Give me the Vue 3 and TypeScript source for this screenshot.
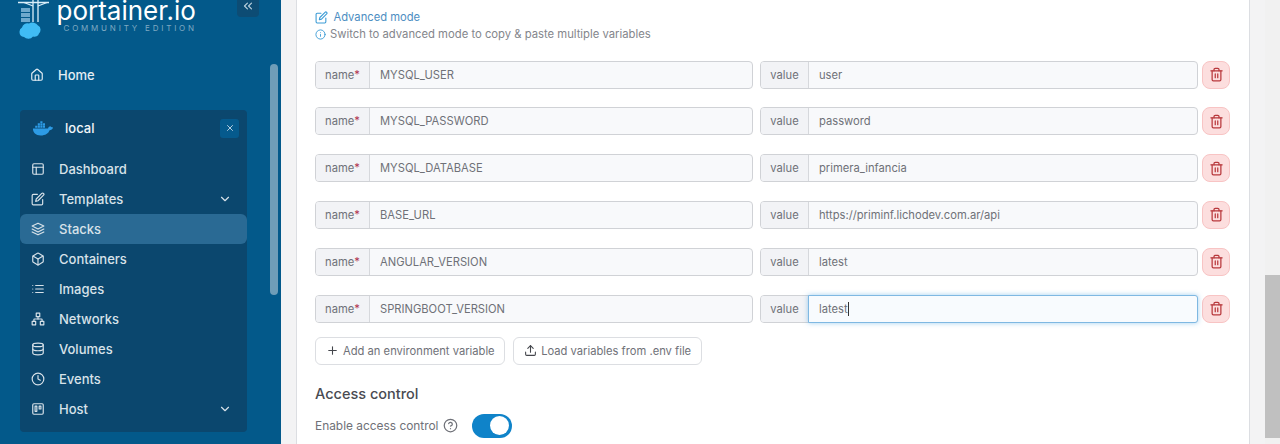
<template>
  <div class="page">
    <aside class="sidebar">
      <div class="brand">
        <svg class="logo" viewBox="0 0 32 40" width="32" height="40">
          <g fill="none" stroke="#d9eef9" stroke-width="1.3">
            <path d="M0 2.500h31M15 0v22M20 0v22" />
            <path d="M15 6l-9-3.500M20 6l9-3.500" />
          </g>
          <g fill="#6fa9cc">
            <rect x="3" y="8" width="9" height="4" />
            <rect x="3" y="13" width="9" height="4" />
            <rect x="3" y="18" width="9" height="4" />
          </g>
          <path fill="#40bcf4" d="M6 37a5 5 0 0 1-4.500-5 5 5 0 0 1 2.500-4.500 5.500 5.500 0 0 1 7-4 6.500 6.500 0 0 1 9 2 4.500 4.500 0 0 1 2.500 4.500 5 5 0 0 1-1.500 3.500 4.500 4.500 0 0 1-6 3 6 6 0 0 1-9 .5z" />
        </svg>
        <div class="wordmark">
          <span class="word">portainer.io</span>
          <span class="edition">COMMUNITY EDITION</span>
        </div>
        <button class="collapse"><Icon name="chevronsLeft" :size="14" /></button>
      </div>

      <div class="nav-scroll">
        <a class="home"><Icon name="home" :size="14" /><span>Home</span></a>

        <section class="env">
          <div class="env-head">
            <svg class="whale" viewBox="0 0 24 16" width="22" height="15">
              <path fill="#2d9be5" d="M1 8h16.500c.4-1.500 1.500-2.400 2.700-2.400.4.800 1 1.300 2.800 1.300-.6 2-2.200 2.900-3.800 2.900C18 13.200 14.500 15.500 9.500 15.500 4 15.500 1 12.500 1 8z" />
              <path fill="#2d9be5" d="M3.500 5h2.300v2.300H3.500zM6.300 5h2.300v2.300H6.300zM9.100 5h2.300v2.300H9.100zM11.900 5h2.300v2.300h-2.300zM6.300 2.300h2.300v2.300H6.300zM9.100 2.300h2.300v2.300H9.100zM11.900 2.300h2.300v2.300h-2.300zM9.100 0h2.300v2h-2.300z" />
            </svg>
            <span class="env-name">local</span>
            <button class="env-close"><Icon name="x" :size="10" /></button>
          </div>
          <a v-for="item in menu" :key="item.label" class="item" :class="{ active: item.active }">
            <Icon :name="item.icon" :size="14" />
            <span class="item-label">{{ item.label }}</span>
            <Icon v-if="item.more" class="chev" name="chevronDown" :size="14" />
          </a>
        </section>
        <div class="side-thumb"></div>
      </div>
    </aside>

    <main class="content">
      <div class="card">
        <a class="advanced"><Icon name="edit" :size="13" /><span>Advanced mode</span></a>
        <p class="hint"><Icon name="info" :size="11" /><span>Switch to advanced mode to copy &amp; paste multiple variables</span></p>

        <div class="rows">
          <div v-for="(row, i) in envVars" :key="row.name" class="row">
            <div class="group name-group">
              <span class="addon name-addon">name<em>*</em></span>
              <span class="field">{{ row.name }}</span>
            </div>
            <div class="group value-group" :class="{ focused: i === envVars.length - 1 }">
              <span class="addon value-addon">value</span>
              <span class="field">{{ row.value }}<i v-if="i === envVars.length - 1" class="caret"></i></span>
            </div>
            <button class="trash"><Icon name="trash" :size="15" /></button>
          </div>
        </div>

        <div class="actions">
          <button class="btn add"><Icon name="plus" :size="13" /><span>Add an environment variable</span></button>
          <button class="btn load"><Icon name="upload" :size="13" /><span>Load variables from .env file</span></button>
        </div>

        <h3 class="section-title">Access control</h3>
        <div class="access">
          <span>Enable access control</span>
          <Icon class="help" name="help" :size="15" />
          <span class="switch"><span class="knob"></span></span>
        </div>
      </div>
    </main>

    <div class="page-scroll"><div class="page-thumb"></div></div>
  </div>
</template>

<script setup lang="ts">
import { h } from "vue"

const iconPaths: Record<string, string[]> = {
  chevronsLeft: ["M11 17l-5-5 5-5", "M18 17l-5-5 5-5"],
  chevronDown: ["M6 9l6 6 6-6"],
  x: ["M18 6L6 18", "M6 6l12 12"],
  home: [
    "M15 21v-8a1 1 0 0 0-1-1h-4a1 1 0 0 0-1 1v8",
    "M3 10a2 2 0 0 1 .709-1.528l7-5.999a2 2 0 0 1 2.582 0l7 5.999A2 2 0 0 1 21 10v9a2 2 0 0 1-2 2H5a2 2 0 0 1-2-2z",
  ],
  layout: ["M5 3h14a2 2 0 0 1 2 2v14a2 2 0 0 1-2 2H5a2 2 0 0 1-2-2V5a2 2 0 0 1 2-2z", "M3 9h18", "M9 21V9"],
  edit: [
    "M11 4H4a2 2 0 0 0-2 2v14a2 2 0 0 0 2 2h14a2 2 0 0 0 2-2v-7",
    "M18.5 2.5a2.121 2.121 0 0 1 3 3L12 15l-4 1 1-4 9.500-9.500z",
  ],
  layers: ["M12 2L2 7l10 5 10-5-10-5z", "M2 17l10 5 10-5", "M2 12l10 5 10-5"],
  box: [
    "M21 16V8a2 2 0 0 0-1-1.730l-7-4a2 2 0 0 0-2 0l-7 4A2 2 0 0 0 3 8v8a2 2 0 0 0 1 1.730l7 4a2 2 0 0 0 2 0l7-4A2 2 0 0 0 21 16z",
    "M3.270 6.960L12 12.010l8.730-5.050",
    "M12 22.080V12",
  ],
  list: ["M8 6h13", "M8 12h13", "M8 18h13", "M3 6h.01", "M3 12h.01", "M3 18h.01"],
  network: [
    "M9 2h6v6H9z",
    "M16 16h6v6h-6z",
    "M2 16h6v6H2z",
    "M5 16v-3a1 1 0 0 1 1-1h12a1 1 0 0 1 1 1v3",
    "M12 12V8",
  ],
  database: [
    "M21 5c0 1.660-4 3-9 3S3 6.660 3 5s4-3 9-3 9 1.340 9 3z",
    "M21 12c0 1.660-4 3-9 3s-9-1.340-9-3",
    "M3 5v14c0 1.660 4 3 9 3s9-1.340 9-3V5",
  ],
  clock: ["M22 12a10 10 0 1 1-20 0 10 10 0 0 1 20 0z", "M12 6v6l4 2"],
  host: ["M5 3h14a2 2 0 0 1 2 2v14a2 2 0 0 1-2 2H5a2 2 0 0 1-2-2V5a2 2 0 0 1 2-2z", "M7 7h3v9H7z", "M14 7h3v5h-3z"],
  info: ["M22 12a10 10 0 1 1-20 0 10 10 0 0 1 20 0z", "M12 16v-4", "M12 8h.01"],
  trash: [
    "M3 6h18",
    "M19 6v14c0 1-1 2-2 2H7c-1 0-2-1-2-2V6",
    "M8 6V4c0-1 1-2 2-2h4c1 0 2 1 2 2v2",
    "M10 11v6",
    "M14 11v6",
  ],
  plus: ["M12 5v14", "M5 12h14"],
  upload: ["M21 15v4a2 2 0 0 1-2 2H5a2 2 0 0 1-2-2v-4", "M17 8l-5-5-5 5", "M12 3v12"],
  help: [
    "M22 12a10 10 0 1 1-20 0 10 10 0 0 1 20 0z",
    "M9.090 9a3 3 0 0 1 5.830 1c0 2-3 3-3 3",
    "M12 17h.01",
  ],
}

const Icon = (props: { name: string; size: number }) =>
  h(
    "svg",
    {
      class: "icon",
      width: props.size,
      height: props.size,
      viewBox: "0 0 24 24",
      fill: "none",
      stroke: "currentColor",
      "stroke-width": 2,
      "stroke-linecap": "round",
      "stroke-linejoin": "round",
    },
    iconPaths[props.name].map((d) => h("path", { d })),
  )
Icon.props = ["name", "size"]

const menu = [
  { label: "Dashboard", icon: "layout" },
  { label: "Templates", icon: "edit", more: true },
  { label: "Stacks", icon: "layers", active: true },
  { label: "Containers", icon: "box" },
  { label: "Images", icon: "list" },
  { label: "Networks", icon: "network" },
  { label: "Volumes", icon: "database" },
  { label: "Events", icon: "clock" },
  { label: "Host", icon: "host", more: true },
]

const envVars = [
  { name: "MYSQL_USER", value: "user" },
  { name: "MYSQL_PASSWORD", value: "password" },
  { name: "MYSQL_DATABASE", value: "primera_infancia" },
  { name: "BASE_URL", value: "https://priminf.lichodev.com.ar/api" },
  { name: "ANGULAR_VERSION", value: "latest" },
  { name: "SPRINGBOOT_VERSION", value: "latest" },
]
</script>

<style>
html,
body {
  margin: 0;
  overflow: hidden;
}
</style>

<style scoped>
.page {
  display: flex;
  width: 1280px;
  height: 444px;
  overflow: hidden;
  background: #f3f3f4;
  font-family: Inter, "Liberation Sans", sans-serif;
}

.icon {
  flex: none;
  display: block;
}

/* sidebar */

.sidebar {
  flex: none;
  width: 281px;
  background: #03598a;
  color: #e8f0f5;
}

.brand {
  display: flex;
  height: 55px;
  align-items: flex-start;
  padding-left: 18px;
}

.wordmark {
  display: flex;
  flex-direction: column;
  margin-left: 6.500px;
}

.word {
  font-size: 26px;
  line-height: 22px;
  color: #fff;
}

.edition {
  margin-top: 2px;
  padding-left: 7px;
  font-size: 8px;
  line-height: 8px;
  letter-spacing: 2.800px;
  white-space: nowrap;
  color: #7fa9c2;
}

.collapse {
  display: flex;
  align-items: center;
  justify-content: center;
  box-sizing: border-box;
  width: 22px;
  height: 17px;
  margin-left: 40px;
  padding: 0 0 6px;
  border: 0;
  border-radius: 0 0 4px 4px;
  background: #0d4c74;
  color: #b9cfdc;
}

.nav-scroll {
  position: relative;
  padding: 0 34px 0 20px;
}

.home {
  display: flex;
  align-items: center;
  gap: 14px;
  height: 40px;
  padding-left: 10px;
  font-size: 13px;
  font-weight: 500;
  color: #e4edf3;
}

.env {
  margin-top: 15px;
  padding-bottom: 8px;
  width: 227px;
  border-radius: 4px;
  background: #0b476e;
}

.env-head {
  display: flex;
  align-items: center;
  box-sizing: border-box;
  height: 44px;
  padding: 0 8px 8px 12px;
}

.env-name {
  margin-left: 11px;
  font-size: 13px;
  font-weight: 500;
  color: #f2f6f9;
}

.env-close {
  display: flex;
  align-items: center;
  justify-content: center;
  width: 19px;
  height: 19px;
  margin-left: auto;
  padding: 0;
  border: 0;
  border-radius: 3px;
  background: #055a8d;
  color: #d8e6ef;
}

.item {
  display: flex;
  align-items: center;
  height: 30px;
  padding: 0 15px 0 11px;
  border-radius: 6px;
  font-size: 13px;
  font-weight: 500;
  color: #d8e2e9;
}

.item.active {
  background: #2a6a94;
}

.item-label {
  margin-left: 14px;
}

.chev {
  margin-left: auto;
}

.side-thumb {
  position: absolute;
  top: 9px;
  right: 3px;
  width: 8px;
  height: 231px;
  border-radius: 4px;
  background: #6f9db8;
}

/* main */

.content {
  flex: 1;
  min-width: 0;
  padding: 0 15px;
}

.card {
  height: 100%;
  box-sizing: border-box;
  padding: 9px 19px 0 18px;
  border: 1px solid #dcdee2;
  border-width: 0 1px;
  background: #fff;
  color: #6f7178;
  font-size: 11.200px;
}

.advanced {
  display: flex;
  align-items: center;
  gap: 5.500px;
  height: 16px;
  color: #4d8ec2;
}

.advanced .icon {
  color: #3b9bd5;
}

.hint {
  display: flex;
  align-items: center;
  gap: 4px;
  height: 16px;
  margin: 1px 0 0;
  font-size: 11.270px;
  color: #84868c;
}

.hint .icon {
  color: #3b9bd5;
}

.rows {
  display: flex;
  flex-direction: column;
  gap: 18.800px;
  margin-top: 18.600px;
}

.row {
  display: flex;
  align-items: center;
  height: 28px;
}

.group {
  display: flex;
  flex: none;
  box-sizing: border-box;
  width: 437.500px;
  height: 28px;
  border: 1px solid #d0d2d6;
  border-radius: 4px;
  background: #f8f9fb;
}

.value-group {
  margin-left: 7.500px;
}

.addon {
  flex: none;
  display: flex;
  align-items: center;
  justify-content: center;
  box-sizing: border-box;
  border-right: 1px solid #d6d8dc;
  border-radius: 3px 0 0 3px;
  background: #f2f3f6;
  color: #6f7178;
}

.addon em {
  font-style: normal;
  color: #b0304f;
}

.name-addon {
  width: 54px;
}

.value-addon {
  width: 48px;
}

.field {
  display: flex;
  align-items: center;
  padding-left: 10px;
  color: #6f7178;
}

.value-group.focused {
  position: relative;
}

.value-group.focused .field {
  position: absolute;
  top: -1px;
  right: -1px;
  bottom: -1px;
  left: 47px;
  border: 1px solid #7fb8e2;
  border-radius: 0 3px 3px 0;
  background: #f8fbfe;
  box-shadow: 0 0 5px rgba(70, 160, 225, 0.5);
}

.caret {
  width: 1px;
  height: 14px;
  background: #333;
}

.trash {
  flex: none;
  display: flex;
  align-items: center;
  justify-content: center;
  box-sizing: border-box;
  width: 28px;
  height: 28px;
  margin-left: 4.500px;
  padding: 0;
  border: 1px solid #f8c4c4;
  border-radius: 8px;
  background: #fcdede;
  color: #b8383c;
}

.actions {
  display: flex;
  gap: 8px;
  margin-top: 14px;
}

.btn {
  display: flex;
  align-items: center;
  gap: 4.500px;
  box-sizing: border-box;
  height: 28px;
  padding: 0 9.500px;
  border: 1px solid #dcdee2;
  border-radius: 6px;
  background: #fff;
  font-family: inherit;
  font-size: 11.200px;
  color: #6f7178;
}

.btn .icon {
  color: #44464c;
}

.section-title {
  margin: 20.400px 0 0;
  font-size: 14.500px;
  line-height: 18px;
  font-weight: 500;
  color: #494b52;
}

.access {
  display: flex;
  align-items: center;
  height: 24px;
  margin-top: 11px;
  font-size: 11.900px;
  color: #6f7178;
}

.help {
  margin-left: 4px;
  color: #6f7178;
}

.switch {
  display: flex;
  align-items: center;
  justify-content: flex-end;
  box-sizing: border-box;
  width: 40px;
  height: 24px;
  margin-left: 14px;
  padding-right: 2.500px;
  border-radius: 12px;
  background: #0f83c9;
}

.knob {
  width: 19px;
  height: 19px;
  border-radius: 50%;
  background: #fff;
}

/* browser scrollbar */

.page-scroll {
  flex: none;
  width: 15px;
  background: #f1f1f1;
}

.page-thumb {
  height: 163px;
  margin-top: 275px;
  background: #c0c0c0;
}
</style>
